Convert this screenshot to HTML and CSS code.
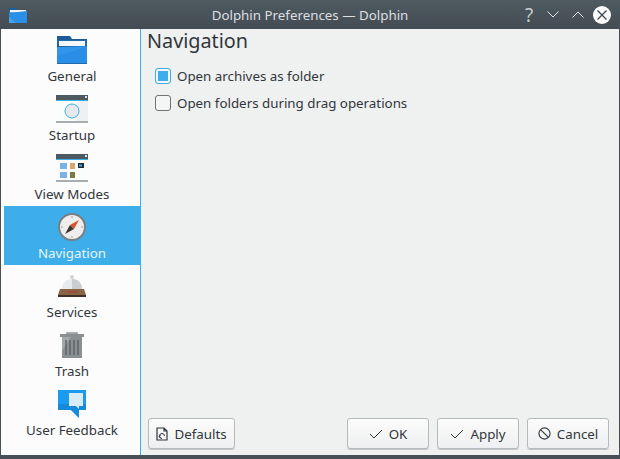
FILE: index.html
```html
<!DOCTYPE html>
<html lang="en">
<head>
<meta charset="utf-8">
<title>Dolphin Preferences — Dolphin</title>
<link rel="stylesheet" href="styles.css">
</head>
<body>
<div class="window">
  <header class="titlebar">
    <svg class="app-icon" width="18" height="16" viewBox="0 0 18 16">
      <path d="M0 1h7l1 2h10v13H0z" fill="#1d5f9e"/>
      <rect y="3" width="18" height="3" fill="#1f6fb5"/>
      <rect x="1" y="3" width="16" height="2.5" fill="#f2f4f5"/>
      <path d="M0 6l18-2v12H0z" fill="#2a8fe6"/>
      <path d="M0 10l7 6H0z" fill="#45a3ee"/>
    </svg>
    <div class="title">Dolphin Preferences — Dolphin</div>
    <div class="controls">
      <span class="help">?</span>
      <svg width="12" height="7" viewBox="0 0 12 7"><path d="M.5.5L6 6l5.500-5.500" class="ctl"/></svg>
      <svg width="12" height="7" viewBox="0 0 12 7"><path d="M.5 6.500L6 1l5.500 5.500" class="ctl"/></svg>
      <svg class="close" width="18" height="18" viewBox="0 0 18 18"><circle cx="9" cy="9" r="9" fill="#fcfcfc"/><path d="M4.500 4.500l9 9M13.500 4.500l-9 9" stroke="#3d474e" stroke-width="1.300"/></svg>
    </div>
  </header>
  <div class="body">
    <nav class="sidebar">
      <div class="item">
        <svg width="30" height="28" viewBox="0 0 30 28">
          <path d="M0 0h13l2 3h15v25H0z" fill="#1c5b96"/>
          <rect y="4" width="30" height="5" fill="#1e6cb0"/>
          <rect x="2" y="5" width="26" height="5" fill="#f4f6f7"/>
          <path d="M0 11l30-1v18H0z" fill="#2a8ee6"/>
          <path d="M0 11h30L0 20z" fill="#389aec" opacity=".6"/>
          <path d="M0 27h30v1H0z" fill="#1d6bb0"/>
        </svg>
        <span>General</span>
      </div>
      <div class="item">
        <svg width="32" height="28" viewBox="0 0 32 28">
          <rect width="32" height="28" fill="#fbfcfc"/>
          <rect width="32" height="5" fill="#4d5a62"/>
          <rect x="29" y="1" width="2" height="2" fill="#dfe3e5"/>
          <rect y="5" width="32" height="1" fill="#3daee9"/>
          <rect y="26" width="32" height="2" fill="#a8adb0"/>
          <path d="M32 6v20H20L14 14l10-8z" fill="#eef0f1"/>
          <circle cx="16" cy="16" r="7" fill="#e6e9eb" stroke="#3daee9" stroke-width="1"/>
        </svg>
        <span>Startup</span>
      </div>
      <div class="item">
        <svg width="32" height="28" viewBox="0 0 32 28">
          <rect width="32" height="28" fill="#fbfcfc"/>
          <rect width="32" height="5" fill="#4d5a62"/>
          <rect x="29" y="1" width="2" height="2" fill="#dfe3e5"/>
          <rect y="5" width="32" height="1" fill="#3daee9"/>
          <rect y="26" width="32" height="2" fill="#a8adb0"/>
          <rect x="4" y="9" width="7" height="6" fill="#7ab2e4"/>
          <rect x="14" y="9" width="5" height="6" fill="#e0a468"/>
          <rect x="22" y="9" width="6" height="5" fill="#1e2a30"/>
          <rect x="23" y="10.500" width="3" height="2" fill="#3daee9"/>
          <rect x="4" y="18" width="7" height="6" fill="#7ab2e4"/>
          <rect x="14" y="18" width="5" height="6" fill="#7d7a45"/>
        </svg>
        <span>View Modes</span>
      </div>
      <div class="item selected">
        <svg width="28" height="28" viewBox="0 0 28 28">
          <circle cx="14" cy="14" r="13" fill="#f0eeec" stroke="#777f84" stroke-width="2"/>
          <path d="M14 3v2M14 23v2M3 14h2M23 14h2" stroke="#9aa0a3" stroke-width="1"/>
          <path d="M21 7l-9 5 4 4z" fill="#d5562e"/>
          <path d="M7 21l9-5-4-4z" fill="#3a3533"/>
        </svg>
        <span>Navigation</span>
      </div>
      <div class="item">
        <svg width="28" height="28" viewBox="0 0 28 28">
          <circle cx="14" cy="5" r="2" fill="#d0d3d5"/>
          <path d="M4 17c0-6 4-10 10-10s10 4 10 10z" fill="#e8eaeb"/>
          <path d="M14 7c6 0 10 4 10 10H14z" fill="#c9cdd0"/>
          <path d="M2 17h24l2 6H0z" fill="#8a6344"/>
          <rect x="10" y="19" width="9" height="2" fill="#a0483c"/>
          <rect y="23" width="28" height="2" fill="#3f3029"/>
        </svg>
        <span>Services</span>
      </div>
      <div class="item">
        <svg width="24" height="28" viewBox="0 0 24 28">
          <path d="M7 3V2h10v1" fill="none" stroke="#8a8f92" stroke-width="1.500"/>
          <rect y="3" width="24" height="3" fill="#8a8f92"/>
          <rect x="2" y="6" width="20" height="21" fill="#8a8f92"/>
          <path d="M2 6h9L2 20z" fill="#a3a8ab"/>
          <path d="M6 9v15M10 9v15M14 9v15M18 9v15" stroke="#5f6467" stroke-width="1.500"/>
        </svg>
        <span>Trash</span>
      </div>
      <div class="item">
        <svg width="28" height="28" viewBox="0 0 28 28">
          <path d="M0 0h28v20h-7v8l-8-8H0z" fill="#1a9bf0"/>
          <path d="M0 14h28v6h-7v8l-8-8H0z" fill="#1583d4" opacity=".7"/>
          <path d="M11 3h14v13h-4v3l-3-3h-7z" fill="#d8ebf7"/>
        </svg>
        <span>User Feedback</span>
      </div>
    </nav>
    <main class="content">
      <h1>Navigation</h1>
      <div class="options">
        <label class="option"><span class="box checked"></span>Open archives as folder</label>
        <label class="option"><span class="box"></span>Open folders during drag operations</label>
      </div>
      <footer class="buttons">
        <button class="btn defaults">
          <svg width="12" height="14" viewBox="0 0 12 14"><path d="M1 1h7l3 3v9H1zM8 1v3h3" fill="none" stroke="#31363b" stroke-width="1.200"/><path d="M8.500 9a2.500 2.500 0 1 0-2.500 2.500M4.500 8L3 9.500M4.500 11L3 9.500" fill="none" stroke="#31363b"/></svg>
          Defaults
        </button>
        <div class="spacer"></div>
        <button class="btn w-ok">
          <svg width="14" height="10" viewBox="0 0 14 10"><path d="M1 5l4 4 8-8" fill="none" stroke="#31363b"/></svg>
          OK
        </button>
        <button class="btn w-apply">
          <svg width="14" height="10" viewBox="0 0 14 10"><path d="M1 5l4 4 8-8" fill="none" stroke="#31363b"/></svg>
          Apply
        </button>
        <button class="btn w-cancel">
          <svg width="13" height="13" viewBox="0 0 14 14"><circle cx="7" cy="7" r="6" fill="none" stroke="#31363b" stroke-width="1.200"/><path d="M3 3l8 8" stroke="#31363b" stroke-width="1.200"/></svg>
          Cancel
        </button>
      </footer>
    </main>
  </div>
</div>
</body>
</html>
```
FILE: styles.css
```css
* { box-sizing: border-box; }
html, body { margin: 0; padding: 0; }
body { width: 620px; height: 459px; overflow: hidden; font-family: "Noto Sans", sans-serif; font-size: 13.33px; color: #31363b; }
.window { width: 620px; height: 459px; display: flex; flex-direction: column; background: #475057; padding: 0 1px 4px; }
.titlebar { height: 29px; flex: none; margin: 0 -1px; padding: 0 9px 0 9px; display: flex; align-items: center; position: relative; background: linear-gradient(#4f5a61, #434c52); color: #e4e6e7; }
.app-icon { flex: none; }
.title { position: absolute; left: 0; right: 0; text-align: center; font-size: 13.33px; color: #dcdfe1; }
.controls { margin-left: auto; display: flex; align-items: center; gap: 13px; position: relative; }
.help { font-size: 19px; color: #c8cccf; width: 10px; text-align: center; line-height: 18px; }
.close { margin-left: -4px; }
.ctl { fill: none; stroke: #e3e5e6; stroke-width: 1; }
.body { flex: 1; display: flex; min-height: 0; background: #eff0f0; }
.sidebar { width: 140px; flex: none; background: #fcfcfc; border-right: 1px solid #3daee9; padding-left: 3px; }
.item { height: 59px; display: flex; flex-direction: column; align-items: center; padding-top: 7px; width: 136px; line-height: 18px; }
.item svg { flex: none; margin-bottom: 3px; }
.item.selected { background: #3daee9; color: #e8f5fc; }
.content { flex: 1; min-width: 0; padding: 0 10px 0 6px; display: flex; flex-direction: column; }
h1 { margin: 0; font-size: 19.8px; font-weight: 400; line-height: 24px; height: 25px; color: #31363b; }
.options { padding: 13px 0 0 8px; display: flex; flex-direction: column; gap: 9px; }
.option { display: flex; align-items: center; gap: 6px; height: 18px; }
.box { width: 16px; height: 16px; border: 1px solid #6e7377; border-radius: 3px; background: #f4f5f5; flex: none; }
.box.checked { border-color: #3daee9; background: #f4f5f5; box-shadow: inset 0 0 0 2px #f4f5f5, inset 0 0 0 12px #3daee9; }
.buttons { margin-top: auto; padding-bottom: 6px; padding-left: 1px; display: flex; gap: 8px; }
.spacer { flex: 1; }
.btn { height: 31px; display: flex; align-items: center; justify-content: center; gap: 6px; padding: 0; font: inherit; color: #31363b; background: linear-gradient(#fcfcfc, #eeeff0); border: 1px solid #b6b9bc; border-radius: 3px; box-shadow: 0 1px 0 #c6c9cb; }
.defaults { width: 87px; }
.w-ok { width: 82px; }
.w-apply { width: 82px; }
.w-cancel { width: 82px; }
```
